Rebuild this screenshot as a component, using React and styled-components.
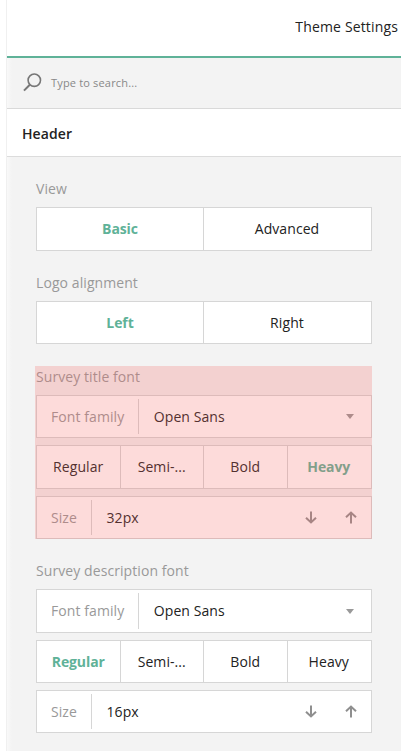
import styled, { createGlobalStyle } from 'styled-components';
import { useState } from 'react';

const accent = '#5fb298';

const GlobalStyle = createGlobalStyle`
  html, body {
    margin: 0;
    padding: 0;
    background: #fff;
    overflow: hidden;
  }
  * {
    box-sizing: border-box;
  }
`;

const Page = styled.div`
  width: 401px;
  height: 751px;
  padding-left: 6px;
  overflow: hidden;
  font-family: 'Open Sans', sans-serif;
  font-size: 14px;
  letter-spacing: 0.08px;
  color: #222;
`;

const Panel = styled.div`
  height: 100%;
  border-left: 1px solid #f0f0f0;
  background: linear-gradient(90deg, #f9f9f9, #f3f3f3 5px);
`;

const Tabs = styled.div`
  height: 58px;
  display: flex;
  justify-content: flex-end;
  align-items: flex-start;
  padding: 17px 3px 0 0;
  background: #fff;
  border-bottom: 2px solid ${accent};
  line-height: 20px;
  letter-spacing: 0.15px;
`;

const Search = styled.div`
  height: 51px;
  display: flex;
  align-items: center;
  gap: 9px;
  padding: 0 0 1px 16px;
  border-bottom: 1px solid #d9d9d9;
  font-size: 11px;
  font-weight: 400;
  letter-spacing: 0.17px;
  color: #888;
`;

const Heading = styled.div`
  height: 48px;
  padding-left: 15px;
  background: #fff;
  border-bottom: 1px solid #dcdcdc;
  font-weight: 600;
  line-height: 49px;
`;

const Content = styled.div`
  padding: 21px 29px 0;
`;

const Section = styled.section`
  position: relative;
  margin-bottom: ${(p) => p.$gap}px;
  ${(p) =>
    p.$flagged &&
    `
    &::after {
      content: '';
      position: absolute;
      inset: 0 0 0 -1px;
      background: rgba(247, 100, 96, 0.23);
      pointer-events: none;
    }
  `}
`;

const Label = styled.div`
  height: 29px;
  color: #999;
  line-height: 22px;
`;

const Row = styled.div`
  display: flex;
  height: ${(p) => p.$height}px;
  margin-bottom: ${(p) => p.$gap || 0}px;
  padding-right: ${(p) => (p.$segmented ? 1 : 0)}px;
  background: #fff;
  border: 1px solid #d6d6d6;
`;

const Segment = styled.div`
  flex: 1 1 0;
  display: flex;
  justify-content: center;
  align-items: center;
  min-width: 0;
  padding-bottom: 1px;
  color: ${(p) => (p.$active ? accent : '#222')};
  font-weight: ${(p) => (p.$active ? 700 : 400)};
  letter-spacing: ${(p) => (p.$active ? '-0.1px' : 'inherit')};
  & + & {
    border-left: 1px solid #d6d6d6;
  }
`;

const FieldLabel = styled.div`
  display: flex;
  align-items: center;
  padding: 0 14px 1px;
  margin: 3px 0;
  border-right: 1px solid #d6d6d6;
  color: #999;
`;

const Value = styled.div`
  flex: 1;
  display: flex;
  align-items: center;
  padding: 0 0 1px 14.5px;
`;

const Caret = styled.span`
  width: 0;
  height: 0;
  margin: 0 17px 0 0;
  align-self: center;
  border-left: 4.5px solid transparent;
  border-right: 4.5px solid transparent;
  border-top: 5px solid #999;
`;

const Stepper = styled.button`
  width: 40px;
  padding: 0;
  display: flex;
  justify-content: center;
  align-items: center;
  border: 0;
  background: none;
`;

const SearchIcon = () => (
  <svg width="19" height="19" viewBox="0 0 19 19" fill="none" stroke="#777">
    <circle cx="11.3" cy="7.2" r="6.2" strokeWidth="1.6" />
    <path d="M6.8 11.8 L1 17.6" strokeWidth="2" />
  </svg>
);

const ArrowIcon = ({ up }) => (
  <svg
    width="12"
    height="13"
    viewBox="0 0 12 13"
    fill="none"
    stroke="#8f8f8f"
    strokeWidth="2"
    style={{ transform: up ? 'rotate(180deg)' : 'none' }}
  >
    <path d="M6 0.5 V11.5 M1 6.8 L6 11.5 L11 6.8" />
  </svg>
);

const WEIGHTS = ['Regular', 'Semi-...', 'Bold', 'Heavy'];

const FontGroup = ({ title, weight, initialSize, flagged, gap, heights }) => {
  const [size, setSize] = useState(initialSize);
  return (
    <Section $flagged={flagged} $gap={gap}>
      <Label>{title}</Label>
      <Row $height={heights[0]} $gap={7}>
        <FieldLabel>Font family</FieldLabel>
        <Value>Open Sans</Value>
        <Caret />
      </Row>
      <Row $height={heights[1]} $gap={7} $segmented>
        {WEIGHTS.map((w) => (
          <Segment key={w} $active={w === weight}>
            {w}
          </Segment>
        ))}
      </Row>
      <Row $height={heights[2]}>
        <FieldLabel>Size</FieldLabel>
        <Value>{size}px</Value>
        <Stepper onClick={() => setSize(size - 1)}>
          <ArrowIcon />
        </Stepper>
        <Stepper onClick={() => setSize(size + 1)}>
          <ArrowIcon up />
        </Stepper>
      </Row>
    </Section>
  );
};

export default function App() {
  return (
    <Page>
      <GlobalStyle />
      <Panel>
        <Tabs>Theme Settings</Tabs>
        <Search>
          <SearchIcon />
          Type to search...
        </Search>
        <Heading>Header</Heading>
        <Content>
          <Section $gap={21}>
            <Label>View</Label>
            <Row $height={44} $segmented>
              <Segment $active>Basic</Segment>
              <Segment>Advanced</Segment>
            </Row>
          </Section>
          <Section $gap={22}>
            <Label>Logo alignment</Label>
            <Row $height={43} $segmented>
              <Segment $active>Left</Segment>
              <Segment>Right</Segment>
            </Row>
          </Section>
          <FontGroup
            title="Survey title font"
            weight="Heavy"
            initialSize={32}
            flagged
            gap={21}
            heights={[43, 44, 43]}
          />
          <FontGroup
            title="Survey description font"
            weight="Regular"
            initialSize={16}
            heights={[44, 43, 43]}
          />
        </Content>
      </Panel>
    </Page>
  );
}
